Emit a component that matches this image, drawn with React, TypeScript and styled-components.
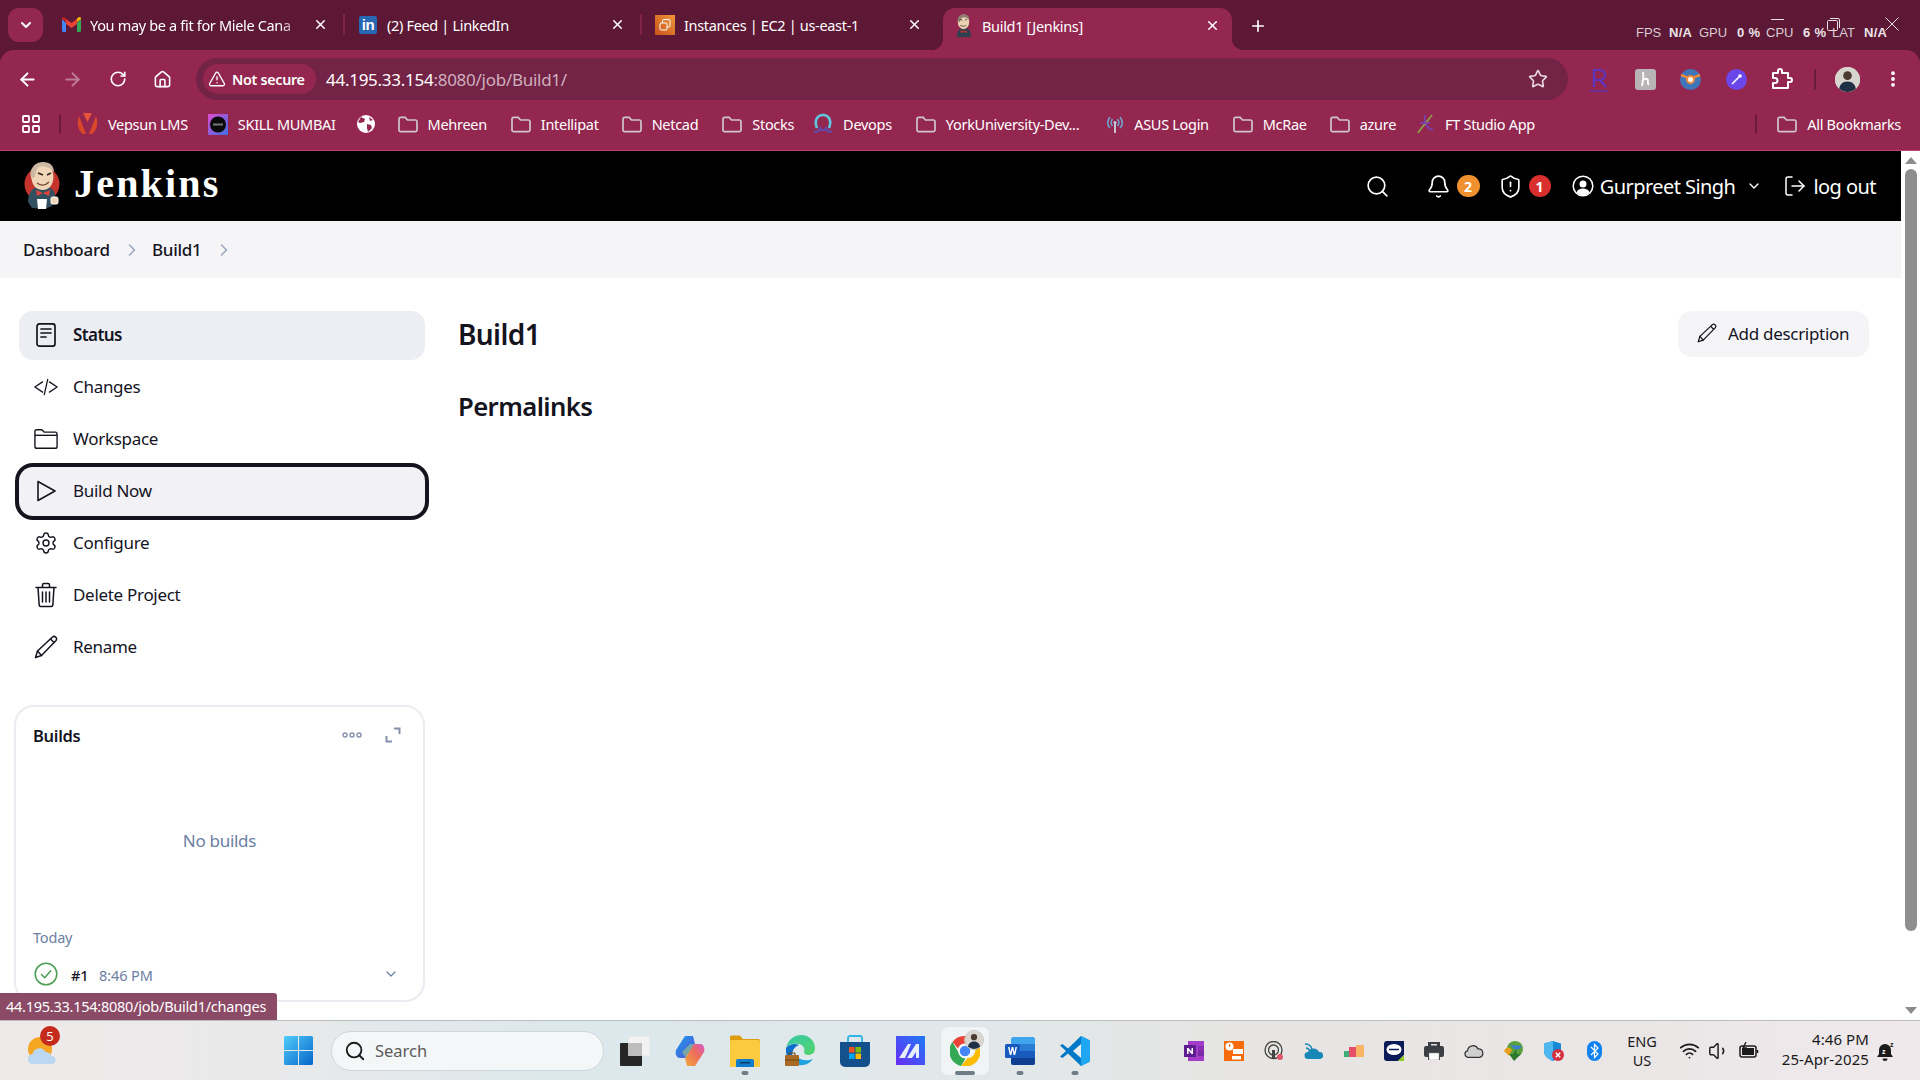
import React from "react";
import styled, { createGlobalStyle } from "styled-components";
import {
  ArrowLeft, ArrowRight, RotateCw, House, Star, X, Plus, EllipsisVertical, TriangleAlert,
  Settings, Search as SearchIcon, Bell, ShieldAlert, ChevronDown, ChevronRight, LogOut, Volume1, Wifi,
} from "lucide-react";

const UI = `"Noto Sans", "Open Sans", sans-serif`;

const Global = createGlobalStyle`
  html, body { margin: 0; padding: 0; overflow: hidden; background: #fff; }
  * { box-sizing: border-box; }
  body { font-family: ${UI}; }
`;

const Screen = styled.div`
  position: relative; width: 1920px; height: 1080px; display: flex; flex-direction: column; overflow: hidden;
`;
const Frame = styled.header`background: #5c1835; flex: none;`;
const TabStrip = styled.div`height: 50px; display: flex; align-items: flex-end; padding-left: 8px; position: relative;`;
const TabMenu = styled.button`
  width: 35px; height: 34px; margin-bottom: 8px; margin-right: 4px; background: #942750; border: 0; border-radius: 11px; color: #fff;
  display: flex; align-items: center; justify-content: center; padding: 0;
`;
const Tab = styled.div<{ $active?: boolean; $sep?: boolean }>`
  position: relative; height: 42px; display: flex; align-items: center; color: #fff; font-size: 14.5px;
  flex: none; letter-spacing: -0.33px;
  width: ${(p) => (p.$active ? "289px" : "297px")};
  margin: ${(p) => (p.$active ? "0 0 0 5px" : "0")};
  padding: ${(p) => (p.$active ? "0 12px 0 10px" : "0 16px 0 14px")};
  padding-bottom: 9px;
  background: ${(p) => (p.$active ? "#942750" : "transparent")};
  border-radius: 12px 12px 0 0;
  ${(p) => p.$active && `padding-bottom: 7px;
    &::before, &::after { content: ""; position: absolute; bottom: 0; width: 12px; height: 12px; }
    &::before { left: -12px; background: radial-gradient(circle at 0 0, transparent 12px, #942750 12.5px); }
    &::after { right: -12px; background: radial-gradient(circle at 100% 0, transparent 12px, #942750 12.5px); }
  `}
  ${(p) => p.$sep && `&::after { content: ""; position: absolute; right: -1px; top: 6px; width: 2px; height: 21px; background: #832345; border-radius: 1px; }`}
`;
const TabIcon = styled.span`width: 20px; height: 20px; flex: none; margin-right: 9px; display: flex; align-items: center; justify-content: center;`;
const TabTitle = styled.span<{ $fade?: boolean }>`
  flex: 1; min-width: 0; white-space: nowrap; overflow: hidden;
  ${(p) => p.$fade && `mask-image: linear-gradient(90deg, #000 90%, rgba(0,0,0,.25) 100%);`}
`;
const TabClose = styled.span`width: 16px; flex: none; display: flex; justify-content: center; margin-left: 12px; color: #fff;`;
const NewTab = styled.span`color: #fff; margin-bottom: 15px; margin-left: 17px; display: flex;`;
const LinkedInMark = styled.span`
  width: 18px; height: 18px; border-radius: 2px; background: #2867b2; color: #fff; font: bold 15px/18px "Liberation Sans", sans-serif; text-align: center; letter-spacing: -0.5px;
`;

const Overlay = styled.div`
  position: absolute; left: 1636px; top: 25px; display: flex; align-items: center; height: 16px;
  font: 13px/16px "Liberation Sans", sans-serif; color: #d9ccd2; white-space: nowrap;
`;
const OverLabel = styled.span<{ $w: number }>`width: ${(p) => p.$w}px; flex: none;`;
const OverValue = styled.b<{ $w: number }>`width: ${(p) => p.$w}px; flex: none; color: #ebe2e6; letter-spacing: .3px;`;
const WinControls = styled.div`position: absolute; top: 17px; left: 1771px; display: flex; align-items: center; color: #e8dfe3;`;
const WinMin = styled.span`width: 13px; height: 1px; background: #e8dfe3; margin-top: -9px; margin-right: 43px;`;
const WinMax = styled.span`margin-right: 45px; display: flex;`;

const Toolbar = styled.div`
  height: 50px; background: #942750; border-radius: 14px 14px 0 0; display: flex; padding: 8px 0 0 5px; color: #fff;
`;
const NavBtn = styled.span<{ $dim?: boolean }>`
  width: 45px; height: 42px; display: flex; align-items: center; justify-content: center; color: ${(p) => (p.$dim ? "#bd7d97" : "#fff")};
`;
const MenuBtn = styled(NavBtn)`margin-left: 11px;`;
const Omnibox = styled.div`
  width: 1372px; height: 42px; margin-left: 11px; background: #732345; border-radius: 21px; display: flex; align-items: center; padding: 0 0 0 7px; color: #fff;
`;
const SecureChip = styled.span`
  height: 30px; width: 113px; background: #942750; border-radius: 15px; display: flex; align-items: center; padding-left: 5px; gap: 6px;
  font-size: 14.3px; font-weight: 600; letter-spacing: -0.3px; flex: none;
`;
const UrlText = styled.span`margin-left: 10px; font-size: 17px; letter-spacing: -0.27px; color: #fff; white-space: nowrap;`;
const UrlDim = styled.span`color: #cfb0be;`;
const OmniStar = styled.span`margin-left: auto; margin-right: 20px; display: flex; color: #e6d5dc;`;
const ExtRow = styled.div`display: flex; align-items: center; margin-left: 9px; height: 42px;`;
const ExtSlot = styled.span`width: 45.5px; display: flex; align-items: center; justify-content: center; flex: none;`;
const VSep = styled.span<{ $h?: number; $m?: string }>`
  width: 2px; height: ${(p) => p.$h ?? 21}px; background: #6b1c3d; border-radius: 1px; flex: none; margin: ${(p) => p.$m ?? "0"};
`;
const Avatar = styled.span<{ $size: number }>`
  display: flex; width: ${(p) => p.$size}px; height: ${(p) => p.$size}px; border-radius: 50%; overflow: hidden; flex: none; background: #d6d2cc;
`;

const Bookmarks = styled.nav`
  height: 51px; background: #942750; border-bottom: 1px solid #b8446f; display: flex; align-items: center; padding: 0 0 2px 22px; color: #fff;
  font-size: 14.5px; letter-spacing: -0.3px; white-space: nowrap;
`;
const BookmarkItem = styled.span<{ $ml?: number }>`
  display: flex; align-items: center; gap: 10px; margin-left: ${(p) => p.$ml ?? 21}px; flex: none;
`;
const BookmarkEnd = styled.span`margin-left: auto; display: flex; align-items: center; padding-right: 19px;`;

const Body = styled.div`flex: 1; min-height: 0; display: flex;`;
const Page = styled.main`flex: 1; min-width: 0; display: flex; flex-direction: column; background: #fff; color: #14141f;`;
const JenkinsBar = styled.div`height: 70px; background: #000; color: #fff; display: flex; align-items: center; padding: 0 25px 0 24px; flex: none;`;
const Wordmark = styled.span`
  font: bold 40px/1 "Liberation Serif", serif; margin-left: 14px; color: #fff; letter-spacing: 2.2px; margin-top: -4px;
`;
const HeaderRight = styled.div`margin-left: auto; display: flex; align-items: center; height: 100%; font-size: 20px;`;
const HeaderIcon = styled.span<{ $ml?: number }>`display: flex; align-items: center; margin-left: ${(p) => p.$ml ?? 0}px;`;
const Badge = styled.span<{ $bg: string; $w: number }>`
  width: ${(p) => p.$w}px; height: 22px; border-radius: 11px; background: ${(p) => p.$bg}; color: #fff; font-size: 14px; font-weight: 700;
  display: flex; align-items: center; justify-content: center; margin-left: 6px;
`;
const HeaderText = styled.span<{ $ml: number }>`margin-left: ${(p) => p.$ml}px; letter-spacing: -0.55px; white-space: nowrap;`;

const Crumbs = styled.div`
  height: 57px; background: #f5f5f7; display: flex; align-items: center; padding-left: 23px; font-size: 17px; font-weight: 500; letter-spacing: -0.25px; flex: none;
`;
const CrumbSep = styled.span<{ $mr: number }>`display: flex; color: #9aa6bd; margin: 1px ${(p) => p.$mr}px 0 12px;`;

const Content = styled.div`flex: 1; min-height: 0; display: flex; padding: 33px 32px 0 14px;`;
const Side = styled.aside`width: 411px; flex: none; display: flex; flex-direction: column;`;
const NavList = styled.div`display: flex; flex-direction: column; gap: 3px; padding-left: 5px;`;
const NavRow = styled.div<{ $state?: "current" | "focus" }>`
  height: 49px; border-radius: 14px; display: flex; align-items: center; padding: 0 0 2px 15px; gap: 15px; font-size: 17px; letter-spacing: -0.3px; color: #14141f;
  ${(p) => p.$state === "current" && `background: #edeef3; font-weight: 600; letter-spacing: -0.6px;`}
  ${(p) => p.$state === "focus" && `background: #f2f2f6; box-shadow: 0 0 0 4px #14141f;`}
`;
const NavIcon = styled.span`width: 24px; height: 24px; display: flex; align-items: center; justify-content: center; flex: none;`;

const Card = styled.section`
  margin-top: 33px; height: 297px; border: 2px solid #ebebf1; border-radius: 20px; padding: 14px 17px 8px; display: flex; flex-direction: column; background: #fff;
`;
const CardHead = styled.div`height: 30px; display: flex; align-items: center; font-size: 16.5px; font-weight: 600; letter-spacing: -0.3px; flex: none; padding-bottom: 2px;`;
const CardTools = styled.div`margin-left: auto; display: flex; align-items: center; gap: 23px; margin-right: 5px; color: #8491ab;`;
const Empty = styled.div`flex: 1; display: flex; align-items: center; justify-content: center; color: #6b80a3; font-size: 17px; letter-spacing: -0.3px;`;
const DayLabel = styled.div`height: 18px; line-height: 16px; font-size: 14.5px; color: #6b80a3; letter-spacing: -0.2px; flex: none;`;
const BuildRow = styled.div`height: 36px; margin-top: 9px; display: flex; align-items: center; padding-left: 1px; flex: none; font-size: 14.5px;`;
const BuildNo = styled.span`margin-left: 13px; font-weight: 500; width: 28px; margin-top: 2px;`;
const BuildTime = styled.span`color: #6b80a3; margin-top: 2px; letter-spacing: -0.1px;`;
const BuildMore = styled.span`margin-left: auto; margin-right: 7px; display: flex; color: #6b80a3;`;

const MainCol = styled.div`flex: 1; min-width: 0; margin-left: 33px;`;
const TitleRow = styled.div`display: flex; align-items: flex-start; justify-content: space-between; height: 46px;`;
const Title = styled.h1`margin: 0; font-size: 28px; line-height: 46px; font-weight: 600; letter-spacing: -0.6px;`;
const Sub = styled.h2`margin: 32px 0 0; font-size: 25.7px; line-height: 36px; font-weight: 600; letter-spacing: -0.6px;`;
const AddBtn = styled.button`
  width: 191px; height: 46px; border: 0; background: #f5f5f7; border-radius: 14px; display: flex; align-items: center; padding: 0 0 2px 19px; gap: 11px;
  font: 17px ${UI}; letter-spacing: -0.3px; color: #14141f;
`;

const ScrollTrack = styled.div`width: 19px; flex: none; background: #fff; display: flex; flex-direction: column; align-items: center; padding: 6px 0 6px;`;
const ScrollArrow = styled.span<{ $down?: boolean }>`
  width: 0; height: 0; border-left: 6px solid transparent; border-right: 6px solid transparent;
  ${(p) => (p.$down ? "border-top: 7px solid #8c8c8c;" : "border-bottom: 7px solid #8c8c8c;")}
  flex: none;
`;
const ScrollThumb = styled.span`width: 12px; height: 762px; margin-top: 5px; background: #8e8e8e; border-radius: 6px; flex: none;`;
const ScrollSpace = styled.span`flex: 1;`;

const StatusTip = styled.div`
  position: absolute; left: 0; bottom: 60px; width: 277px; height: 27px; background: #8b4a66; color: #fff; border-radius: 0 3px 0 0;
  font-size: 14.5px; line-height: 27px; padding-left: 6px; white-space: nowrap; letter-spacing: -0.25px;
`;

const Taskbar = styled.footer`
  height: 60px; flex: none; display: flex; align-items: center; border-top: 1px solid #b9bdbf; color: #1b1b1b;
  background: linear-gradient(90deg, #efeaea 0%, #e9e9ea 14%, #dce8ec 30%, #e1e8ea 50%, #e6e5e3 65%, #ebe6e6 85%, #efe9ec 100%);
`;
const Weather = styled.span`position: relative; width: 284px; height: 100%; flex: none; display: flex; align-items: center; padding-left: 28px;`;
const WeatherBadge = styled.span`
  position: absolute; left: 40px; top: 5px; width: 20px; height: 20px; border-radius: 50%; background: #c42b1c; color: #fff; font-size: 13px; line-height: 20px; text-align: center;
`;
const SearchBox = styled.div`
  width: 273px; height: 40px; margin-left: 18px; margin-right: 3.5px; border-radius: 20px; background: #f4f7f8; border: 1px solid #cfd6d9; display: flex; align-items: center; padding-left: 12px; gap: 9px;
  color: #5b5b5b; font-size: 16.5px; flex: none;
`;
const AppSlot = styled.span<{ $running?: "short" | "long"; $active?: boolean }>`
  position: relative; width: 55px; height: 48px; flex: none; display: flex; align-items: center; justify-content: center;
  ${(p) => p.$active && `&::before { content: ""; position: absolute; left: 3px; right: 4px; top: 0; bottom: 0; background: #f1f4f5; border-radius: 6px; box-shadow: 0 0 1px #c7cdd0; }`}
  & > svg { position: relative; }
  ${(p) => p.$running && `&::after { content: ""; position: absolute; bottom: 0; left: 50%; transform: translateX(-50%); height: 4px; border-radius: 2px; background: #6e7d85; width: ${p.$running === "long" ? 20 : 7}px; }`}
`;
const ChromeBadge = styled.span`
  position: absolute; left: 26px; top: 3px; width: 20px; height: 20px; border-radius: 50%; overflow: hidden; display: flex; border: 1px solid #c4c4c4;
`;
const TrayRow = styled.div`display: flex; margin-left: 71.5px; flex: none;`;
const TraySlot = styled.span`width: 40px; height: 40px; display: flex; align-items: center; justify-content: center; flex: none;`;
const Lang = styled.div`width: 56px; text-align: center; font-size: 14.5px; line-height: 19px; flex: none;`;
const SysSlot = styled.span`width: 30px; height: 30px; display: flex; align-items: center; justify-content: center; flex: none; color: #1b1b1b;`;
const SysRow = styled.div`display: flex; margin-left: 4px;`;
const Clock = styled.div`margin-left: auto; text-align: right; font-size: 15px; line-height: 20px; margin-right: 8px; padding-bottom: 3px; letter-spacing: 0.1px;`;
const QuietBell = styled.span`display: flex; margin-right: 23px;`;

/* ---------- drawings ---------- */
const GmailMark = () => (
  <svg width="19" height="15" viewBox="0 0 19 15">
    <path d="M0 2v11.5A1.5 1.5 0 0 0 1.5 15H4V6z" fill="#4285f4" />
    <path d="M15 6v9h2.5a1.5 1.5 0 0 0 1.5-1.5V2z" fill="#34a853" />
    <path d="M4 2v5l5.5 4L15 7V2L9.5 6z" fill="#ea4335" />
    <path d="M0 2l4 3V1.5L2.6.4A1.6 1.6 0 0 0 0 2z" fill="#c5221f" />
    <path d="M15 1.5V5l4-3a1.6 1.6 0 0 0-2.6-1.6z" fill="#fbbc04" />
  </svg>
);
const Ec2Mark = () => (
  <svg width="20" height="20" viewBox="0 0 20 20">
    <defs><linearGradient id="aws" x1="0" y1="1" x2="1" y2="0"><stop offset="0" stopColor="#c8511b" /><stop offset="1" stopColor="#f0983a" /></linearGradient></defs>
    <rect width="20" height="20" fill="url(#aws)" />
    <g fill="none" stroke="#fff" strokeWidth="1">
      <rect x="5" y="8" width="7" height="7" rx="1" /><path d="M7.5 8V5.6a1 1 0 0 1 1-1H14a1 1 0 0 1 1 1v5.4a1 1 0 0 1-1 1h-2" />
    </g>
  </svg>
);
const JenkinsLogo = ({ size = 48 }: { size?: number }) => (
  <svg width={(size * 36) / 48} height={size} viewBox="0 0 36 48">
    <circle cx="18" cy="22" r="17.500" fill="#c5342c" />
    <path d="M4 40c0-8 3-13 9-15h11c5 1 8 6 7 12l-3 7-7 3-13-1z" fill="#335061" />
    <path d="M10 4C13 0 22 0 26 4c3 4 4 10 3 15-1 5-5 9-10 9-6 0-10-4-11-9L7 15c-1-4 0-8 3-11z" fill="#f0d6b7" />
    <path d="M7 15C5 6 12 0 19 0s11 4 11 10c-4-5-12-7-15-5-3 2-3 7-5 11z" fill="#cbb9a4" />
    <path d="M14 11l5 2M23 13l4-2" stroke="#2b211c" strokeWidth="1.400" fill="none" />
    <path d="M13 21c4 3 8 3 12-1" stroke="#7a4a35" strokeWidth="1.300" fill="none" />
    <path d="M12 28l7 3 7-3-1 6-6-3-6 3z" fill="#e0423c" />
    <path d="M13 37h10l-1 10h-8z" fill="#fff" />
    <rect x="27" y="35" width="7" height="7" rx="1.500" fill="#f0d6b7" stroke="#fff" />
  </svg>
);
const FaviconJenkins = () => (
  <svg width="19" height="24" viewBox="0 0 36 46">
    <path d="M5 44c0-8 3-14 8-16h11c5 1 8 6 8 16z" fill="#2e3f4d" />
    <ellipse cx="18" cy="15" rx="11" ry="14" fill="#e9d1b4" />
    <path d="M7 14C6 5 12 1 19 1s10 4 10 10c-3-4-10-6-14-4-3 2-3 6-4 9z" fill="#8d8072" />
    <path d="M11 10l5 2M21 12l4-2M12 22c4 2 8 2 11 0" stroke="#3a2b22" strokeWidth="1.400" fill="none" />
    <path d="M12 31l6 2 6-2-1 6-5-3-5 3z" fill="#c5342c" />
  </svg>
);
const AppsGrid = () => (
  <svg width="18" height="18" viewBox="0 0 18 18" fill="none" stroke="#fff" strokeWidth="1.800">
    <rect x="1" y="1" width="6" height="6" rx=".8" /><rect x="11" y="1" width="6" height="6" rx=".8" />
    <rect x="1" y="11" width="6" height="6" rx=".8" /><rect x="11" y="11" width="6" height="6" rx=".8" />
  </svg>
);
const FolderMark = () => (
  <svg width="20" height="17" viewBox="0 0 20 17" fill="none" stroke="#cfc6ca" strokeWidth="1.700">
    <path d="M1 3a1.6 1.6 0 0 1 1.6-1.6h4.6L9.5 4h8A1.6 1.6 0 0 1 19 5.600V14a1.600 1.600 0 0 1-1.600 1.600H2.600A1.600 1.600 0 0 1 1 14z" />
  </svg>
);
const VepsunMark = () => (
  <svg width="21" height="22" viewBox="0 0 21 22">
    <path d="M2 3C0 8 0 17 6 21h3z" fill="#d9472b" /><path d="M19 3c2 5 2 14-4 18h-3z" fill="#d9472b" />
    <path d="M6 0h9l-4.500 9z" fill="#e8533a" />
  </svg>
);
const SkillMark = () => (
  <svg width="20" height="21" viewBox="0 0 20 21">
    <defs><linearGradient id="sk" x1="0" y1="0" x2="1" y2="1"><stop offset="0" stopColor="#e04bd0" /><stop offset="1" stopColor="#3b6fe0" /></linearGradient></defs>
    <rect width="20" height="21" fill="url(#sk)" /><circle cx="10" cy="10.500" r="8" fill="#0a0a0a" /><rect x="5" y="9.500" width="10" height="2" fill="#777" />
  </svg>
);
const GlobeMark = () => (
  <svg width="18" height="18" viewBox="0 0 18 18">
    <circle cx="9" cy="9" r="9" fill="#fff" />
    <path d="M4 2l4 2-1 3-4 1-2-1zM10 9l4 1 1 3-4 4-1-4zM12 2l4 3-3 1z" fill="#942750" />
  </svg>
);
const DevopsMark = () => (
  <svg width="20" height="22" viewBox="0 0 20 22" fill="none">
    <path d="M4 15C1 8 4 2 10 2s9 6 6 13" stroke="#5ec7dc" strokeWidth="2.600" />
    <path d="M1 18c3 2 5 0 6-3 1 3 5 3 6 0 1 3 3 5 6 3" stroke="#5a4fb5" strokeWidth="1.800" />
  </svg>
);
const AsusMark = () => (
  <svg width="18" height="20" viewBox="0 0 18 20" fill="none" stroke="#6ea6cf" strokeWidth="1.500">
    <path d="M4 3C1 7 1 11 4 14M14 3c3 4 3 8 0 11M6.500 5c-2 3-2 5 0 7M11.500 5c2 3 2 5 0 7" />
    <circle cx="9" cy="8.500" r="1.500" fill="#b9d4e6" stroke="none" /><path d="M9 9v10" stroke="#c9c4d4" strokeWidth="2" />
  </svg>
);
const FtMark = () => (
  <svg width="18" height="20" viewBox="0 0 18 20" fill="none" strokeWidth="1.800">
    <path d="M8 1c-1 6-1 12 8 15" stroke="#7a3fb0" /><path d="M15 1C10 8 5 13 1 19" stroke="#8a9a48" /><path d="M3 9h10" stroke="#7a3fb0" />
  </svg>
);
const PersonFace = () => (
  <svg width="100%" height="100%" viewBox="0 0 26 26">
    <rect width="26" height="26" fill="#d8d5cf" /><circle cx="13" cy="9" r="4.500" fill="#4b3a30" />
    <path d="M4 26c0-8 4-11 9-11s9 3 9 11z" fill="#1f3044" />
  </svg>
);
const ExtR = () => (
  <svg width="22" height="26" viewBox="0 0 22 26" fill="none" stroke="#5a36c4" strokeWidth="2.200">
    <path d="M5 21V4h6a5 5 0 0 1 0 10H5M11 14l6 7" /><path d="M1 25h18" strokeWidth="1.200" />
  </svg>
);
const ExtH = () => (
  <svg width="21" height="21" viewBox="0 0 21 21">
    <rect width="21" height="21" rx="3" fill="#b8b3b5" />
    <path d="M8 3c1 5 0 9-1 14M7 12c2-3 6-3 6 0 0 2-1 3 1 4" stroke="#fff" strokeWidth="1.800" fill="none" />
  </svg>
);
const ExtEye = () => (
  <svg width="21" height="21" viewBox="0 0 21 21">
    <circle cx="10.500" cy="10.500" r="10.500" fill="#3f76b9" />
    <path d="M1 6c3 1 6 3 9.500 3S17 7 20 6" stroke="#ef8a3c" strokeWidth="2.500" fill="none" />
    <circle cx="10.500" cy="10.500" r="4.500" fill="#ef8a3c" /><circle cx="10.500" cy="10.500" r="2.500" fill="#fff" />
  </svg>
);
const ExtWand = () => (
  <svg width="21" height="21" viewBox="0 0 21 21">
    <circle cx="10.500" cy="10.500" r="10.500" fill="#6b46e8" />
    <path d="M6 15l7-7" stroke="#fff" strokeWidth="1.600" /><circle cx="14" cy="7" r="1.800" fill="#fff" />
  </svg>
);
const ExtPuzzle = () => (
  <svg width="22" height="22" viewBox="0 0 22 22" fill="none" stroke="#fff" strokeWidth="2" strokeLinejoin="round">
    <path d="M2 5h5V3a2 2 0 0 1 4 0v2h6v5h2a2 2 0 0 1 0 4h-2v6H2v-5h2a2.500 2.500 0 0 0 0-5H2z" />
  </svg>
);
const IconStatus = () => (
  <svg width="24" height="24" viewBox="0 0 24 24" fill="none" stroke="#14141f" strokeWidth="1.700" strokeLinecap="round">
    <rect x="3" y=".8" width="18" height="22.400" rx="2.500" /><path d="M7 6h10M7 10h10M7 14h5" />
  </svg>
);
const IconCode = () => (
  <svg width="28" height="24" viewBox="0 0 28 24" fill="none" stroke="#14141f" strokeWidth="1.500" strokeLinecap="round" strokeLinejoin="round">
    <path d="M10 6l-9 6 9 6M18 6l9 6-9 6M16 3L12 21" />
  </svg>
);
const IconFolder = () => (
  <svg width="26" height="22" viewBox="0 0 26 22" fill="none" stroke="#14141f" strokeWidth="1.500" strokeLinejoin="round">
    <path d="M1 5V3a2 2 0 0 1 2-2h5.500L11 3.500h12a2 2 0 0 1 2 2V19a2 2 0 0 1-2 2H3a2 2 0 0 1-2-2z" /><path d="M1 7h24" />
  </svg>
);
const IconPlay = () => (
  <svg width="24" height="24" viewBox="0 0 24 24" fill="none" stroke="#14141f" strokeWidth="1.600" strokeLinejoin="round">
    <path d="M4 2.500L21 12 4 21.500z" />
  </svg>
);
const IconTrash = () => (
  <svg width="22" height="26" viewBox="0 0 22 26" fill="none" stroke="#14141f" strokeWidth="1.500" strokeLinecap="round" strokeLinejoin="round">
    <path d="M1 5.500h20M7.500 5.500V3a1.500 1.500 0 0 1 1.500-1.500h4A1.500 1.500 0 0 1 14.500 3v2.500M3 5.500l1.200 17.700A1.500 1.500 0 0 0 5.700 24.500h10.600a1.500 1.500 0 0 0 1.500-1.300L19 5.500M7.500 10v10M11 10v10M14.500 10v10" />
  </svg>
);
const IconPencil = ({ size = 24 }: { size?: number }) => (
  <svg width={size} height={size} viewBox="0 0 24 24" fill="none" stroke="#14141f" strokeWidth="1.500" strokeLinejoin="round" strokeLinecap="round">
    <path d="M1.500 22.500l2-6.500L18.500 2a2.500 2.500 0 0 1 3.500 3.500L7.500 20.500z" /><path d="M16.500 4l3.500 3.500M3.500 16l4 4.500" />
  </svg>
);
const IconUser = () => (
  <svg width="22" height="22" viewBox="0 0 22 22">
    <circle cx="11" cy="11" r="9.800" fill="none" stroke="#fff" strokeWidth="1.500" />
    <circle cx="11" cy="9" r="3.500" fill="#fff" /><path d="M4.500 17.500c1-3 3.500-4 6.500-4s5.500 1 6.500 4A9 9 0 0 1 11 20.500a9 9 0 0 1-6.500-3z" fill="#fff" />
  </svg>
);
const IconDots = () => (
  <svg width="20" height="6" viewBox="0 0 20 6" fill="none" stroke="currentColor" strokeWidth="1.400">
    <circle cx="3" cy="3" r="2" /><circle cx="10" cy="3" r="2" /><circle cx="17" cy="3" r="2" />
  </svg>
);
const IconExpand = () => (
  <svg width="16" height="16" viewBox="0 0 16 16" fill="none" stroke="currentColor" strokeWidth="2">
    <path d="M9 1.500h5.500V7M1.500 9v5.500H7" />
  </svg>
);
const IconCheck = () => (
  <svg width="24" height="24" viewBox="0 0 24 24" fill="none" stroke="#4c9f56" strokeWidth="1.500" strokeLinecap="round" strokeLinejoin="round">
    <circle cx="12" cy="12" r="10.800" /><path d="M7.500 12.500l3.200 3.200 6-7" />
  </svg>
);
const WeatherMark = () => (
  <svg width="28" height="28" viewBox="0 0 28 28">
    <circle cx="12" cy="12" r="12" fill="#f5a623" />
    <path d="M5 27a5 5 0 0 1-.5-10 7 7 0 0 1 13-2 6 6 0 0 1 6 4 4 4 0 0 1 0 8z" fill="#bcd7f2" />
  </svg>
);
const WinLogo = () => (
  <svg width="29" height="29" viewBox="0 0 29 29">
    <defs><linearGradient id="w" x1="0" y1="0" x2="1" y2="1"><stop offset="0" stopColor="#4fcdfb" /><stop offset="1" stopColor="#0665c9" /></linearGradient></defs>
    <path d="M0 1.500A1.500 1.500 0 0 1 1.500 0H14v14H0zM15 0h12.500A1.500 1.500 0 0 1 29 1.500V14H15zM0 15h14v14H1.500A1.500 1.500 0 0 1 0 27.500zM15 15h14v12.500a1.500 1.500 0 0 1-1.500 1.500H15z" fill="url(#w)" />
  </svg>
);
const TaskView = () => (
  <svg width="30" height="30" viewBox="0 0 30 30">
    <rect x="8" y="0" width="22" height="20" rx="1" fill="#f2f2f2" stroke="#e0e2e3" /><rect x="0" y="7" width="22" height="23" rx="1" fill="#262626" /><rect x="8" y="7" width="14" height="13" fill="#bdbdbd" />
  </svg>
);
const Copilot = () => (
  <svg width="30" height="32" viewBox="0 0 30 32">
    <defs>
      <linearGradient id="c1" x1="0" y1="0" x2="1" y2="1"><stop offset="0" stopColor="#1aa0e8" /><stop offset=".6" stopColor="#3e6fe0" /><stop offset="1" stopColor="#8c50d8" /></linearGradient>
      <linearGradient id="c2" x1="0" y1="1" x2="1" y2="0"><stop offset="0" stopColor="#f4a83a" /><stop offset=".6" stopColor="#ec6a5e" /><stop offset="1" stopColor="#d45ad0" /></linearGradient>
    </defs>
    <path d="M10 1h8l2 8-9 14H5C1 23 0 18 1 15z" fill="url(#c1)" />
    <path d="M20 31h-8l-2-8 9-14h6c4 0 5 5 4 8z" fill="url(#c2)" />
    <path d="M7 17l4 6 8-14-4 0z" fill="#9fd47e" opacity=".55" />
  </svg>
);
const Explorer = () => (
  <svg width="30" height="32" viewBox="0 0 30 32">
    <path d="M0 2a1.500 1.500 0 0 1 1.500-1.500H10L13 4h15.500A1.500 1.500 0 0 1 30 5.500V10H0z" fill="#dc9e10" />
    <rect y="5" width="30" height="27" rx="1.500" fill="#fcca3f" />
    <path d="M6 32v-6a2 2 0 0 1 2-2h14a2 2 0 0 1 2 2v6z" fill="#0f7dcb" /><rect x="10" y="27" width="10" height="1.500" fill="#0b3d6b" />
  </svg>
);
const Edge = () => (
  <svg width="30" height="31" viewBox="0 0 30 31">
    <defs><linearGradient id="e1" x1="0" y1="0" x2="1" y2="1"><stop offset="0" stopColor="#36c9a8" /><stop offset="1" stopColor="#54d46a" /></linearGradient></defs>
    <path d="M1 13C3 5 9 0 16 0c8 0 14 6 14 13 0 5-3 7-7 7-2 0-4-1-4-3 1-3 0-7-5-8-6-1-11 0-13 4z" fill="url(#e1)" />
    <path d="M1 13c3-4 9-5 13-3-6 2-8 8-6 14 1 3 3 5 6 6C7 30 0 23 1 13z" fill="#0c6fc9" />
    <path d="M14 30c6 1 11-2 14-6-5 2-12 2-15-2-1 3-1 6 1 8z" fill="#1fa2e0" />
    <rect x="0" y="20" width="14" height="11" rx="1" fill="#a86a24" /><path d="M4 20v-2h6v2M0 25h14" stroke="#6f4412" fill="none" />
  </svg>
);
const Store = () => (
  <svg width="30" height="32" viewBox="0 0 30 32">
    <path d="M8 7V3a2 2 0 0 1 2-2h10a2 2 0 0 1 2 2v4" fill="none" stroke="#2fb4e8" strokeWidth="1.800" />
    <path d="M0 7h30v20a5 5 0 0 1-5 5H5a5 5 0 0 1-5-5z" fill="#14508c" />
    <rect x="9" y="12" width="5.500" height="5.500" fill="#f25022" /><rect x="15.500" y="12" width="5.500" height="5.500" fill="#7fba00" />
    <rect x="9" y="18.500" width="5.500" height="5.500" fill="#00a4ef" /><rect x="15.500" y="18.500" width="5.500" height="5.500" fill="#ffb900" />
  </svg>
);
const BlueApp = () => (
  <svg width="29" height="29" viewBox="0 0 29 29">
    <defs><linearGradient id="b" x1="0" y1="1" x2="1" y2="0"><stop offset="0" stopColor="#6a2cf5" /><stop offset="1" stopColor="#1e7bf5" /></linearGradient></defs>
    <rect width="29" height="29" fill="url(#b)" />
    <path d="M3 22L12 8h3L9 22zM11 22L20 8h3v14h-3v-6l-4 6z" fill="#e7eefc" />
  </svg>
);
const ChromeMark = () => (
  <svg width="30" height="30" viewBox="0 0 30 30">
    <path d="M15 0a15 15 0 0 1 13 7.500H15a7.500 7.500 0 0 0-7 5L2.500 6A15 15 0 0 1 15 0z" fill="#ea4335" />
    <path d="M2.500 6l6 10.500a7.500 7.500 0 0 0 7 6L11 30A15 15 0 0 1 2.500 6z" fill="#34a853" />
    <path d="M28 7.500A15 15 0 0 1 11 30l6.500-8a7.500 7.500 0 0 0 3-14.500z" fill="#fbbc04" />
    <circle cx="15" cy="15" r="6" fill="#4285f4" stroke="#fff" strokeWidth="1.500" />
  </svg>
);
const WordMark = () => (
  <svg width="30" height="28" viewBox="0 0 30 28">
    <rect x="6" width="24" height="28" rx="2" fill="#41a5ee" /><rect x="6" y="7" width="24" height="7" fill="#2b7cd3" /><rect x="6" y="14" width="24" height="7" fill="#185abd" /><path d="M6 21h24v5a2 2 0 0 1-2 2H8a2 2 0 0 1-2-2z" fill="#103f91" />
    <rect y="7" width="15" height="14" rx="1.500" fill="#185abd" /><path d="M3 10l1.800 8h1.500l1.200-5 1.200 5h1.500L12 10h-1.500l-1 5.200L8.300 10H6.700l-1.200 5.200L4.500 10z" fill="#fff" />
  </svg>
);
const VSCode = () => (
  <svg width="30" height="30" viewBox="0 0 30 30">
    <path d="M21 0l9 4.500v21L21 30 8 17.500 2.500 22 0 20.500 6 15 0 9.500 2.500 8 8 12.500z" fill="#0078c8" /><path d="M21 0l9 4.500v21L21 30z" fill="#1fa8f1" /><path d="M21 8l-8 7 8 7z" fill="#e3edf2" />
  </svg>
);
const OneNote = () => (
  <svg width="20" height="20" viewBox="0 0 20 20">
    <rect x="4" width="16" height="20" fill="#a33cc9" /><rect x="14" y="5" width="6" height="5" fill="#8a2fb3" /><rect x="14" y="10" width="6" height="5" fill="#7b2aa5" /><rect y="4" width="12" height="12" fill="#5f1d90" /><path d="M3 13V7h1.500l3 3.500V7H9v6H7.600l-3-3.500V13z" fill="#fff" />
  </svg>
);
const OrangePrinter = () => (
  <svg width="20" height="20" viewBox="0 0 20 20">
    <rect width="20" height="20" fill="#f76b0a" /><circle cx="5.500" cy="5.500" r="4" fill="#fff" /><rect x="5" y="3" width="1.200" height="3" fill="#f76b0a" /><rect x="9" y="8" width="10" height="5" fill="#fff" /><rect x="8" y="15" width="9" height="3.500" fill="#fff" />
  </svg>
);
const Podcast = () => (
  <svg width="20" height="20" viewBox="0 0 20 20" fill="none" stroke="#444" strokeWidth="1.300">
    <circle cx="9.500" cy="9" r="8.500" /><circle cx="9.500" cy="9" r="5" /><path d="M9.500 9v9" strokeWidth="3" /><circle cx="16" cy="16" r="3" fill="#e0566a" stroke="none" />
  </svg>
);
const BlueCloud = () => (
  <svg width="20" height="16" viewBox="0 0 20 16" fill="#1787b8">
    <path d="M4 16a3.500 3.500 0 0 1 0-7 6 6 0 0 1 11 0 3.500 3.500 0 0 1 1 7z" /><path d="M1 1c3 0 6 2 7 5M2 5c2 0 3 1 4 3" stroke="#1787b8" strokeWidth="1.500" fill="none" />
  </svg>
);
const Squares = () => (
  <svg width="20" height="12" viewBox="0 0 20 12">
    <rect y="6" width="6" height="6" fill="#3dae7a" /><rect x="5" y="2" width="7" height="10" fill="#e8506a" /><rect x="12" width="8" height="12" fill="#f8b565" />
  </svg>
);
const Remote = () => (
  <svg width="20" height="20" viewBox="0 0 20 20">
    <path d="M3 0h17v14l-6 6H3a3 3 0 0 1-3-3V3a3 3 0 0 1 3-3z" fill="#0b1b58" /><ellipse cx="10" cy="8.500" rx="7.500" ry="5.500" fill="#fff" /><path d="M5 8.500h10" stroke="#0b1b58" strokeWidth="1.500" /><path d="M14 20l6-6v6z" fill="#8ecb1e" />
  </svg>
);
const Printer = () => (
  <svg width="20" height="18" viewBox="0 0 20 18">
    <path d="M4 0h12v4h2a2 2 0 0 1 2 2v7a2 2 0 0 1-2 2h-2v3H4v-3H2a2 2 0 0 1-2-2V6a2 2 0 0 1 2-2h2z" fill="#3b3f44" /><rect x="5" y="11" width="10" height="7" fill="#fff" stroke="#888" strokeWidth=".5" /><rect x="7" y="2" width="6" height="1.500" fill="#ddd" />
  </svg>
);
const GrayCloud = () => (
  <svg width="20" height="14" viewBox="0 0 20 14">
    <path d="M4 13.300a3.300 3.300 0 0 1-.5-6.500A5.500 5.500 0 0 1 14 5a4.300 4.300 0 0 1 2 8.300z" fill="#cfcfcf" stroke="#333" strokeWidth="1.200" />
  </svg>
);
const Idm = () => (
  <svg width="20" height="20" viewBox="0 0 20 20">
    <circle cx="11" cy="8" r="8" fill="#5aa03c" /><path d="M6 3c3 2 8 1 11 2 1 3-4 4-7 3z" fill="#3a7fd0" /><path d="M0 10c2-5 6-4 8-1l-3 6z" fill="#e8a020" /><path d="M12 8l1 5h4l-7 7-5-7h4z" fill="#2d7a2d" />
  </svg>
);
const DefenderX = () => (
  <svg width="20" height="20" viewBox="0 0 20 20">
    <path d="M9 0l8 2.500V10c0 5-4 8-8 10-5-2-9-5-9-10V2.500z" fill="#1688d8" /><path d="M9 0v20C4 18 0 15 0 10V2.500z" fill="#4fb7ee" /><circle cx="14" cy="14" r="6" fill="#d32f3f" /><path d="M11.800 11.800l4.400 4.400M16.200 11.800l-4.400 4.400" stroke="#fff" strokeWidth="1.500" />
  </svg>
);
const Bluetooth = () => (
  <svg width="15" height="20" viewBox="0 0 15 20">
    <rect width="15" height="20" rx="7.500" fill="#1182f0" /><path d="M4 6l7 7-3.500 3.500v-13L11 7l-7 7" fill="none" stroke="#fff" strokeWidth="1.200" />
  </svg>
);
const Battery = () => (
  <svg width="20" height="18" viewBox="0 0 20 18" fill="none" stroke="#1b1b1b" strokeWidth="1.500">
    <rect x="1" y="4" width="16" height="11" rx="2" /><rect x="3" y="6" width="12" height="7" fill="#1b1b1b" stroke="none" /><path d="M18.500 8v3" /><path d="M7 0L4 6h3l-2 5" stroke="#1b1b1b" strokeWidth="1.300" />
  </svg>
);
const SnoozeBell = () => (
  <svg width="20" height="22" viewBox="0 0 20 22">
    <path d="M8 4a6 6 0 0 1 6 6v4l2 3H0l2-3v-4a6 6 0 0 1 6-6z" fill="#1b1b1b" /><path d="M5.500 18.500a2.500 2.500 0 0 0 5 0z" fill="#1b1b1b" />
    <text x="5" y="13.500" fontSize="7" fontWeight="700" fill="#fff" fontFamily="Liberation Sans">z</text>
    <text x="13" y="7" fontSize="7" fontWeight="700" fill="#1b1b1b" fontFamily="Liberation Sans">z</text>
  </svg>
);

const tabs = [
  { title: "You may be a fit for Miele Cana", icon: <GmailMark />, fade: true, sep: true },
  { title: "(2) Feed | LinkedIn", icon: <LinkedInMark>in</LinkedInMark>, sep: true },
  { title: "Instances | EC2 | us-east-1", icon: <Ec2Mark /> },
];
const bookmarks: { label?: string; icon: React.ReactNode; ml: number }[] = [
  { label: "Vepsun LMS", icon: <VepsunMark />, ml: 16 },
  { label: "SKILL MUMBAI", icon: <SkillMark />, ml: 20 },
  { icon: <GlobeMark />, ml: 21 },
  { label: "Mehreen", icon: <FolderMark />, ml: 23 },
  { label: "Intellipat", icon: <FolderMark />, ml: 24 },
  { label: "Netcad", icon: <FolderMark />, ml: 23 },
  { label: "Stocks", icon: <FolderMark />, ml: 24 },
  { label: "Devops", icon: <DevopsMark />, ml: 19 },
  { label: "YorkUniversity-Dev...", icon: <FolderMark />, ml: 24 },
  { label: "ASUS Login", icon: <AsusMark />, ml: 27 },
  { label: "McRae", icon: <FolderMark />, ml: 24 },
  { label: "azure", icon: <FolderMark />, ml: 23 },
  { label: "FT Studio App", icon: <FtMark />, ml: 21 },
];
const navItems: { label: string; icon: React.ReactNode; state?: "current" | "focus" }[] = [
  { label: "Status", icon: <IconStatus />, state: "current" },
  { label: "Changes", icon: <IconCode /> },
  { label: "Workspace", icon: <IconFolder /> },
  { label: "Build Now", icon: <IconPlay />, state: "focus" },
  { label: "Configure", icon: <Settings size={28} strokeWidth={1.4} color="#14141f" /> },
  { label: "Delete Project", icon: <IconTrash /> },
  { label: "Rename", icon: <IconPencil /> },
];

export default function App() {
  return (
    <Screen>
      <Global />
      <Frame>
        <TabStrip>
          <TabMenu><ChevronDown size={16} strokeWidth={3} /></TabMenu>
          {tabs.map((t) => (
            <Tab key={t.title} $sep={t.sep}>
              <TabIcon>{t.icon}</TabIcon>
              <TabTitle $fade={t.fade}>{t.title}</TabTitle>
              <TabClose><X size={15} strokeWidth={2.4} /></TabClose>
            </Tab>
          ))}
          <Tab $active>
            <TabIcon><FaviconJenkins /></TabIcon>
            <TabTitle>Build1 [Jenkins]</TabTitle>
            <TabClose><X size={15} strokeWidth={2.4} /></TabClose>
          </Tab>
          <NewTab><Plus size={18} strokeWidth={2.2} /></NewTab>
          <Overlay>
            <OverLabel $w={33}>FPS</OverLabel><OverValue $w={30}>N/A</OverValue>
            <OverLabel $w={38}>GPU</OverLabel><OverValue $w={29}>0 %</OverValue>
            <OverLabel $w={37}>CPU</OverLabel><OverValue $w={29}>6 %</OverValue>
            <OverLabel $w={32}>LAT</OverLabel><OverValue $w={26}>N/A</OverValue>
          </Overlay>
          <WinControls>
            <WinMin />
            <WinMax>
              <svg width="13" height="13" viewBox="0 0 13 13" fill="none" stroke="#e8dfe3"><rect x=".5" y="2.500" width="10" height="10" rx="1" /><path d="M3 .5h8a1.500 1.500 0 0 1 1.500 1.500v8" /></svg>
            </WinMax>
            <svg width="14" height="14" viewBox="0 0 14 14" stroke="#e8dfe3"><path d="M.5.5l13 13M13.500.5l-13 13" /></svg>
          </WinControls>
        </TabStrip>
        <Toolbar>
          <NavBtn><ArrowLeft size={21} strokeWidth={2.2} /></NavBtn>
          <NavBtn $dim><ArrowRight size={21} strokeWidth={2.2} /></NavBtn>
          <NavBtn><RotateCw size={18} strokeWidth={2.2} /></NavBtn>
          <NavBtn><House size={19} strokeWidth={2} /></NavBtn>
          <Omnibox>
            <SecureChip><TriangleAlert size={18} strokeWidth={1.8} />Not secure</SecureChip>
            <UrlText>44.195.33.154<UrlDim>:8080/job/Build1/</UrlDim></UrlText>
            <OmniStar><Star size={20} strokeWidth={2} /></OmniStar>
          </Omnibox>
          <ExtRow>
            <ExtSlot><ExtR /></ExtSlot>
            <ExtSlot><ExtH /></ExtSlot>
            <ExtSlot><ExtEye /></ExtSlot>
            <ExtSlot><ExtWand /></ExtSlot>
            <ExtSlot><ExtPuzzle /></ExtSlot>
            <VSep $m="0 19px 0 9px" />
            <Avatar $size={25}><PersonFace /></Avatar>
            <MenuBtn><EllipsisVertical size={20} strokeWidth={2.6} /></MenuBtn>
          </ExtRow>
        </Toolbar>
        <Bookmarks>
          <AppsGrid />
          <VSep $h={20} $m="0 0 0 19px" />
          {bookmarks.map((b, i) => (
            <BookmarkItem key={i} $ml={b.ml}>{b.icon}{b.label}</BookmarkItem>
          ))}
          <BookmarkEnd>
            <VSep $h={20} $m="0 20px 0 0" />
            <BookmarkItem $ml={0}><FolderMark />All Bookmarks</BookmarkItem>
          </BookmarkEnd>
        </Bookmarks>
      </Frame>
      <Body>
        <Page>
          <JenkinsBar>
            <JenkinsLogo />
            <Wordmark>Jenkins</Wordmark>
            <HeaderRight>
              <HeaderIcon><SearchIcon size={25} strokeWidth={1.6} /></HeaderIcon>
              <HeaderIcon $ml={36}><Bell size={25} strokeWidth={1.6} /></HeaderIcon>
              <Badge $bg="#f0902f" $w={23}>2</Badge>
              <HeaderIcon $ml={18}><ShieldAlert size={25} strokeWidth={1.6} /></HeaderIcon>
              <Badge $bg="#d92f2f" $w={22}>1</Badge>
              <HeaderIcon $ml={21}><IconUser /></HeaderIcon>
              <HeaderText $ml={6}>Gurpreet Singh</HeaderText>
              <HeaderIcon $ml={11}><ChevronDown size={16} strokeWidth={2} /></HeaderIcon>
              <HeaderIcon $ml={21}><LogOut size={24} strokeWidth={1.5} /></HeaderIcon>
              <HeaderText $ml={6}>log out</HeaderText>
            </HeaderRight>
          </JenkinsBar>
          <Crumbs>
            Dashboard<CrumbSep $mr={10}><ChevronRight size={20} strokeWidth={1.8} /></CrumbSep>
            Build1<CrumbSep $mr={0}><ChevronRight size={20} strokeWidth={1.8} /></CrumbSep>
          </Crumbs>
          <Content>
            <Side>
              <NavList>
                {navItems.map((n) => (
                  <NavRow key={n.label} $state={n.state}><NavIcon>{n.icon}</NavIcon>{n.label}</NavRow>
                ))}
              </NavList>
              <Card>
                <CardHead>
                  Builds
                  <CardTools><IconDots /><IconExpand /></CardTools>
                </CardHead>
                <Empty>No builds</Empty>
                <DayLabel>Today</DayLabel>
                <BuildRow>
                  <IconCheck />
                  <BuildNo>#1</BuildNo>
                  <BuildTime>8:46 PM</BuildTime>
                  <BuildMore><ChevronDown size={16} strokeWidth={1.8} /></BuildMore>
                </BuildRow>
              </Card>
            </Side>
            <MainCol>
              <TitleRow>
                <Title>Build1</Title>
                <AddBtn><IconPencil size={20} />Add description</AddBtn>
              </TitleRow>
              <Sub>Permalinks</Sub>
            </MainCol>
          </Content>
        </Page>
        <ScrollTrack>
          <ScrollArrow />
          <ScrollThumb />
          <ScrollSpace />
          <ScrollArrow $down />
        </ScrollTrack>
      </Body>
      <StatusTip>44.195.33.154:8080/job/Build1/changes</StatusTip>
      <Taskbar>
        <Weather><WeatherMark /><WeatherBadge>5</WeatherBadge></Weather>
        <WinLogo />
        <SearchBox><SearchIcon size={22} strokeWidth={2} color="#1b1b1b" />Search</SearchBox>
        <AppSlot><TaskView /></AppSlot>
        <AppSlot><Copilot /></AppSlot>
        <AppSlot $running="short"><Explorer /></AppSlot>
        <AppSlot><Edge /></AppSlot>
        <AppSlot><Store /></AppSlot>
        <AppSlot><BlueApp /></AppSlot>
        <AppSlot $active $running="long">
          <ChromeMark />
          <ChromeBadge><PersonFace /></ChromeBadge>
        </AppSlot>
        <AppSlot $running="short"><WordMark /></AppSlot>
        <AppSlot $running="short"><VSCode /></AppSlot>
        <TrayRow>
          <TraySlot><OneNote /></TraySlot>
          <TraySlot><OrangePrinter /></TraySlot>
          <TraySlot><Podcast /></TraySlot>
          <TraySlot><BlueCloud /></TraySlot>
          <TraySlot><Squares /></TraySlot>
          <TraySlot><Remote /></TraySlot>
          <TraySlot><Printer /></TraySlot>
          <TraySlot><GrayCloud /></TraySlot>
          <TraySlot><Idm /></TraySlot>
          <TraySlot><DefenderX /></TraySlot>
          <TraySlot><Bluetooth /></TraySlot>
        </TrayRow>
        <Lang>ENG<br />US</Lang>
        <SysRow>
          <SysSlot><Wifi size={21} strokeWidth={2} /></SysSlot>
          <SysSlot><Volume1 size={22} strokeWidth={1.6} /></SysSlot>
          <SysSlot><Battery /></SysSlot>
        </SysRow>
        <Clock>4:46 PM<br />25-Apr-2025</Clock>
        <QuietBell><SnoozeBell /></QuietBell>
      </Taskbar>
    </Screen>
  );
}
